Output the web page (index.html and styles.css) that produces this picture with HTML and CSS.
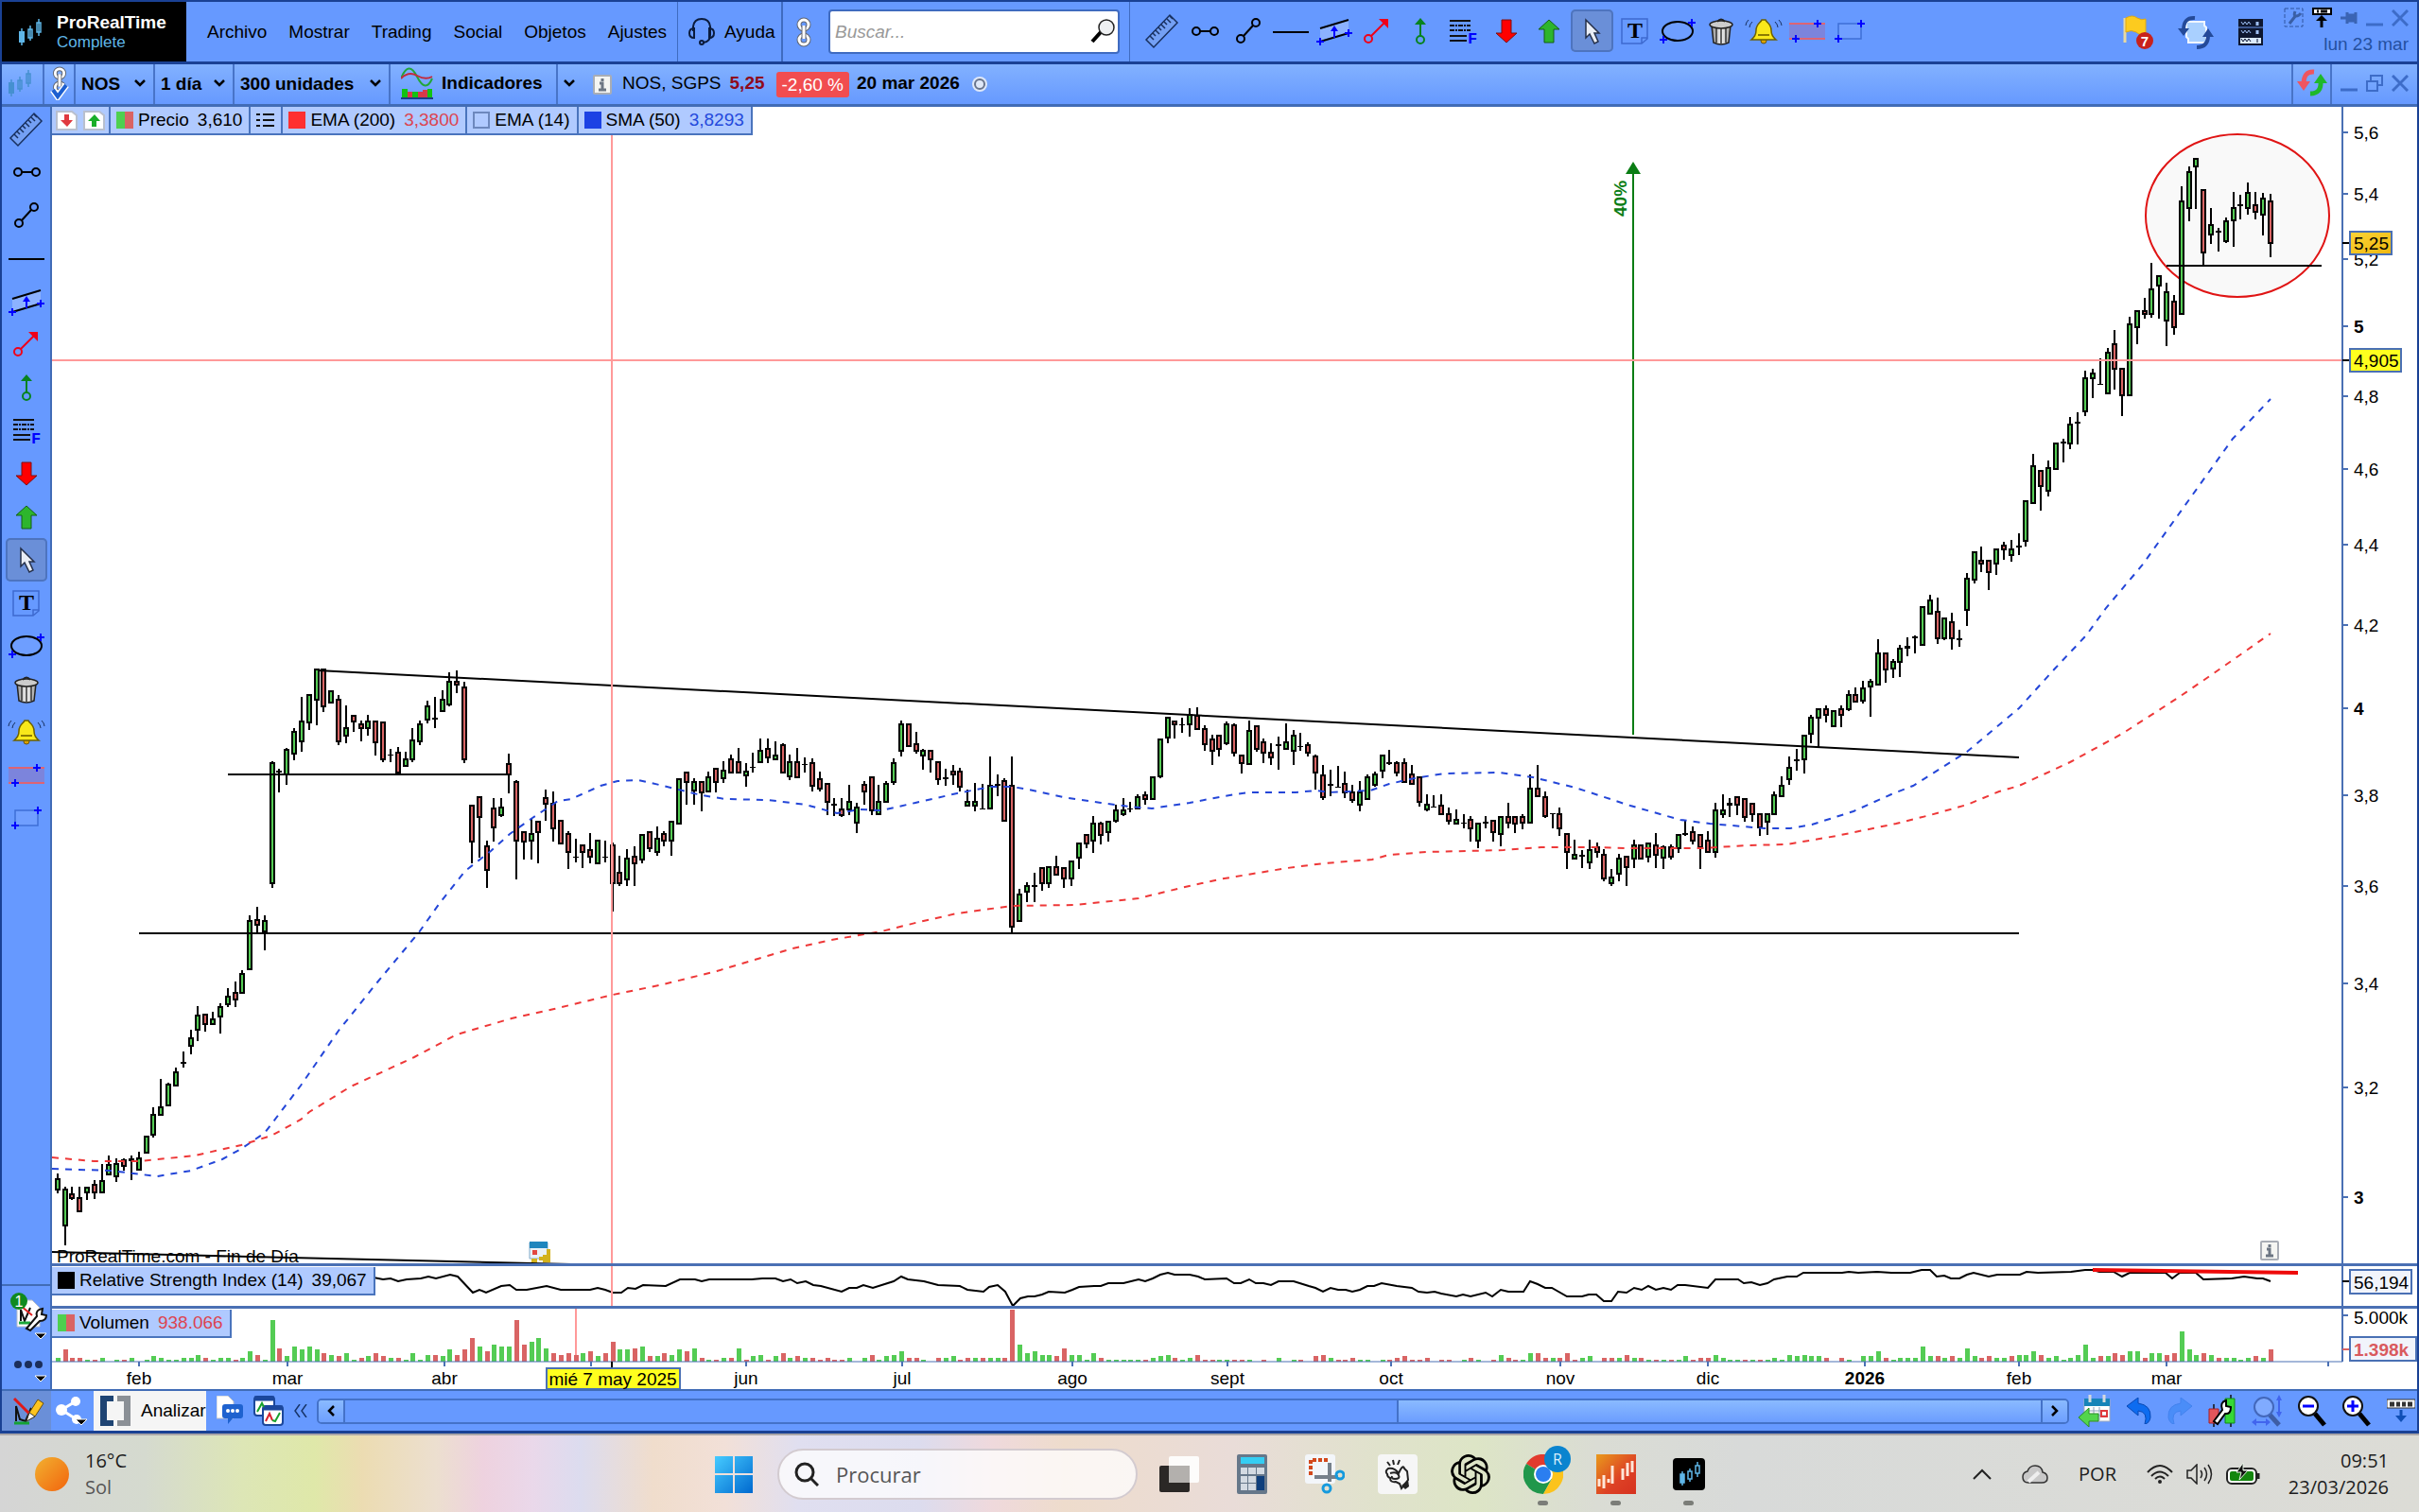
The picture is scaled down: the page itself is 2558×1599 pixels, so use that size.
FILE: index.html
```html
<!DOCTYPE html>
<html lang="es">
<head>
    <meta charset="UTF-8">
    <meta name="viewport" content="width=device-width, initial-scale=1.0">
    <title>ProRealTime Complete</title>
    <link rel="stylesheet" href="styles.css">
</head>
<body>
    <svg class="defs" aria-hidden="true">
        <defs>
            <linearGradient id="gold" x1="0" y1="0" x2="1" y2="1"><stop offset="0" stop-color="#fbd437"/><stop offset="1" stop-color="#efb70f"/></linearGradient>
            <linearGradient id="metal" x1="0" y1="0" x2="1" y2="0"><stop offset="0" stop-color="#8d8d8d"/><stop offset="0.5" stop-color="#f4f4f4"/><stop offset="1" stop-color="#9a9a9a"/></linearGradient>
            <linearGradient id="win" x1="0" y1="0" x2="1" y2="1"><stop offset="0" stop-color="#46cbff"/><stop offset="1" stop-color="#0069cf"/></linearGradient>
            <linearGradient id="sun" x1="0" y1="0" x2="1" y2="1"><stop offset="0" stop-color="#f2b130"/><stop offset="1" stop-color="#f2640d"/></linearGradient>
            <linearGradient id="fire" x1="0" y1="0" x2="1" y2="1"><stop offset="0" stop-color="#e99a1c"/><stop offset="0.6" stop-color="#dd4125"/><stop offset="1" stop-color="#d6321f"/></linearGradient>
        </defs>
        <symbol id="i-ruler" viewBox="-20 -20 40 40"><path d="M-17 9 8-17l8 8-25 26z" fill="#74a0f4" stroke="#18305f" stroke-width="1.5"/><path d="m-13 5 4 4m-1-7 3 3m0-6 4 4m-1-7 3 3m0-6 4 4m-1-7 3 3m0-6 4 4m-1-7 3 3" stroke="#18305f" stroke-width="1.5"/></symbol>
        <symbol id="i-segment" viewBox="-20 -20 40 40"><path d="M-5 0H6" stroke="#000" stroke-width="2"/><g fill="none" stroke="#000" stroke-width="2"><circle cx="-9" r="4"/><circle cx="10" r="4"/></g></symbol>
        <symbol id="i-line" viewBox="-20 -20 40 40"><path d="M-5 5 5-6" stroke="#000" stroke-width="2"/><g fill="none" stroke="#000" stroke-width="2"><circle cx="-8" cy="8" r="4"/><circle cx="8" cy="-9" r="4"/></g></symbol>
        <symbol id="i-hline" viewBox="-20 -20 40 40"><path d="M-19 1h38" stroke="#000" stroke-width="2"/></symbol>
        <symbol id="i-channel" viewBox="-20 -20 40 40"><path d="M-15-4 15-12V2l-30 9z" fill="#8cb2ff"/><path d="M-15-3 15-12M-15 11 15 2" stroke="#000" stroke-width="2"/><path d="M-19 11h8m-4-4v8M11 2h8m-4-4v8M0 7v-8" stroke="#00f" stroke-width="2"/><path d="m0-6 4 6h-8z" fill="#00f"/></symbol>
        <symbol id="i-arrow" viewBox="-20 -20 40 40"><path d="M-6 5 8-9" stroke="#f00018" stroke-width="2"/><circle cx="-9" cy="8" r="4" fill="none" stroke="#f00018" stroke-width="2"/><path d="M2-13h10v10z" fill="#f00018"/></symbol>
        <symbol id="i-measure" viewBox="-20 -20 40 40"><path d="M0 5v-14" stroke="#07831f" stroke-width="2"/><circle cy="9" r="4" fill="none" stroke="#07831f" stroke-width="2"/><path d="m0-14 6 7H-6z" fill="#07831f"/></symbol>
        <symbol id="i-fib" viewBox="-20 -20 40 40"><path d="M-14-11H8M-14 5H4M-14 10H4" stroke="#111" stroke-width="2"/><path d="M-14-6H8M-14-1H8" stroke="#111" stroke-width="2" stroke-dasharray="5 1 2 1"/></symbol>
        <symbol id="i-down" viewBox="-20 -20 40 40"><path d="M-5-12H5V2h6L0 12-11 2h6z" fill="#f00" stroke="#7c1010"/></symbol>
        <symbol id="i-up" viewBox="-20 -20 40 40"><path d="M-5 12H5V-2h6L0-12-11-2h6z" fill="#2db52d" stroke="#155e15"/></symbol>
        <symbol id="i-cursor" viewBox="-20 -20 40 40"><path d="M-6-12V7l4-4 5 10 4-2-4-9h5z" fill="#e9edf5" stroke="#25304a" stroke-width="1.5"/></symbol>
        <symbol id="i-text" viewBox="-20 -20 40 40"><path d="M-14-13h27V8l-6 5h-21zM13 7H7v6" fill="none" stroke="#3e6ad0" stroke-width="1.5"/></symbol>
        <symbol id="i-ellipse" viewBox="-20 -20 40 40"><ellipse rx="16" ry="10" fill="#6e9eff" stroke="#000" stroke-width="2"/><path d="M-19 9h8m-4-4v8M11-9h8m-4-4v8" stroke="#00f" stroke-width="2"/></symbol>
        <symbol id="i-bin" viewBox="-20 -20 40 40"><path d="m-10-6 2 18q8 4 16 0l2-18z" fill="url(#metal)" stroke="#222" stroke-width="1.5"/><path d="M-5-3v15M0-3v16M5-3v15" stroke="#333" stroke-width="1.5"/><ellipse cy="-7" rx="12" ry="4" fill="#ccc" stroke="#222" stroke-width="1.5"/><path d="M-4-10q4-5 8 0" fill="none" stroke="#222" stroke-width="2"/></symbol>
        <symbol id="i-bell" viewBox="-20 -20 40 40"><circle cy="10" r="3" fill="#dca200" stroke="#6b5400"/><path d="M-13 9q5-4 5-10c0-7 5-8 6-11h4c1 3 6 4 6 11q0 6 5 10z" fill="#f9e81a" stroke="#6b5f00" stroke-width="1.5"/><path d="M-6 4H6" stroke="#8d7c00" stroke-width="2"/><path d="M-12-10q-3 3-3 6M-16-12q-3 3-3 6M12-10q3 3 3 6M16-12q3 3 3 6" fill="none" stroke="#18305f"/></symbol>
        <symbol id="i-levels" viewBox="-20 -20 40 40"><path d="M-19-8h38V8h-38z" fill="#7c84dc"/><path d="M-19-8h38M-19 8h38" stroke="#dd6474" stroke-width="2"/><path d="M-16 8h8m-4-4v8M7-8h8m-4-4v8" stroke="#00f" stroke-width="2"/></symbol>
        <symbol id="i-rect" viewBox="-20 -20 40 40"><path d="M-12-8h24V8h-24z" fill="#709fff" stroke="#3e6fd6" stroke-width="1.5"/><path d="M-16 8h8m-4-4v8M8-8h8m-4-4v8" stroke="#00f" stroke-width="2"/></symbol>
        <symbol id="i-chain" viewBox="0 0 16 32"><g fill="none" stroke="#606672" stroke-width="5"><rect x="3" y="3" width="10" height="10" rx="5"/><rect x="3" y="19" width="10" height="10" rx="5"/></g><g fill="none" stroke="#fff" stroke-width="3"><rect x="3" y="3" width="10" height="10" rx="5"/><rect x="3" y="19" width="10" height="10" rx="5"/></g><path d="M8 9v14" stroke="#606672" stroke-width="5"/><path d="M8 9v14" stroke="#fff" stroke-width="3"/></symbol>
        <symbol id="i-candles" viewBox="0 0 26 28"><path d="M4 10v18M13 7v16M22 0v18" stroke="currentColor" stroke-width="1.5"/><path d="M1 13h6v12H1z" fill="currentColor"/><path d="M11 11h4v9h-4zM20 4h4v10h-4z" class="hollow" stroke="currentColor" stroke-width="1.5"/></symbol>
        <symbol id="i-chev" viewBox="0 0 12 8"><path d="m1 1 5 5 5-5" fill="none" stroke="#000" stroke-width="2.5"/></symbol>
        <symbol id="i-info" viewBox="0 0 20 21"><rect x="1" y="1" width="18" height="19" rx="1" fill="#f5f5f2" stroke="#a9adb5" stroke-width="2"/><path d="M10 4v3M7 9h3v7M6 16h8" fill="none" stroke="#6d7683" stroke-width="3"/></symbol>
        <symbol id="i-close" viewBox="0 0 18 18"><path d="m1 1 16 16M17 1 1 17" stroke="#3d6cc8" stroke-width="3"/></symbol>
        <symbol id="i-min" viewBox="0 0 18 18"><path d="M0 16h18" stroke="#3d6cc8" stroke-width="3"/></symbol>
        <symbol id="i-more" viewBox="0 0 14 8"><path d="M1 1h12L7 7z" fill="#000" stroke="#fff"/></symbol>
    </svg>

    <div class="app">
        <header class="top-bar">
            <div class="brand">
                <svg class="brand-icon" width="26" height="28"><use href="#i-candles"/></svg>
                <div>
                    <div class="brand-name">ProRealTime</div>
                    <div class="brand-edition">Complete</div>
                </div>
            </div>
            <nav class="menu">
                <button>Archivo</button>
                <button>Mostrar</button>
                <button>Trading</button>
                <button>Social</button>
                <button>Objetos</button>
                <button>Ajustes</button>
            </nav>
            <button class="help">
                <svg width="28" height="29" viewBox="0 0 28 29" fill="none" stroke="#0b1b3c" stroke-width="2"><path d="M5 14V9Q6 1 14 1t9 8v9q0 7-7 8"/><path d="M6 11q-5 0-5 5t5 5zM22 11q5 0 5 5t-5 5z"/><circle cx="14" cy="26" r="2"/></svg>
                Ayuda
            </button>
            <button class="link-btn" aria-label="Vincular"><svg width="16" height="32"><use href="#i-chain"/></svg></button>
            <label class="search">
                <input type="search" placeholder="Buscar..." aria-label="Buscar">
                <svg width="26" height="26" viewBox="0 0 26 26"><path d="m2 24 9-10" stroke="#000" stroke-width="4"/><circle cx="17" cy="9" r="8" fill="#eef0f2" stroke="#222" stroke-width="1.5"/></svg>
            </label>
            <div class="tools tools-top"></div>
            <div class="status">
                <svg width="32" height="36" viewBox="0 0 32 36"><path d="M2 3v26" stroke="#e9d9a0" stroke-width="3"/><path d="M3 3q7-4 12 0 5 3 9 1v15q-6 3-10-1-5-3-11 0z" fill="#fccb1f" stroke="#e0a910"/><circle cx="23" cy="27" r="9" fill="#c8211c"/><text x="23" y="33" text-anchor="middle" font-size="15" font-weight="700" fill="#fff">7</text></svg>
                <svg width="38" height="36" viewBox="0 0 38 36"><path d="M9 7h19v4l2 2v16H11v-4l-2-2z" fill="#a9d0ff" stroke="#f0f6ff" stroke-width="2"/><path d="M18 3Q6 2 6 16M20 34q12 0 12-13" fill="none" stroke="#244a99" stroke-width="4"/><path d="M0 14h12l-6 8zM26 23h12l-6-9z" fill="#244a99"/></svg>
                <svg width="26" height="28" viewBox="0 0 26 28"><path d="M0 0h26v18H0z" fill="#0e1730"/><path d="M1 19h24v8H1z" fill="#dcebff" stroke="#0e1730" stroke-width="2"/><path d="m3 3 2 3 2-3 2 3 2-3 2 3m-10 6 2 3 2-3 2 3 2-3 2 3" fill="none" stroke="#9fc0f5"/><path d="M0 9h26" stroke="#6a96ea"/><path d="M20 3v4m0 5v4" stroke="#9fc0f5" stroke-width="3"/><path d="m3 21 2 3 2-3 2 3 2-3 2 3m7-3v4" fill="none" stroke="#0e1730"/></svg>
            </div>
            <div class="window-info">
                <div class="window-controls">
                    <svg width="21" height="21" viewBox="0 0 21 21"><path d="M1 1h19v19H1z" fill="none" stroke="#2f559f" stroke-dasharray="4 2"/><path d="m6 17 7-9m-1-4q-2 5 1 5t5-3" stroke="#3a5fa5" stroke-width="3" fill="none"/></svg>
                    <svg width="21" height="21" viewBox="0 0 21 21"><path d="M1 1h19v6H1z" fill="#fff" stroke="#000" stroke-width="2"/><path d="M5 4h2m2 0h7M10 21v-8" stroke="#000" stroke-width="3"/><path d="m10 8 6 6H4z"/></svg>
                    <svg width="18" height="18" viewBox="0 0 18 18"><path d="M0 9h6M7 3v12M8 6h8v6H8zM16 3v12" stroke="#3a64b4" stroke-width="3" fill="#3a64b4"/></svg>
                    <svg width="18" height="18"><use href="#i-min"/></svg>
                    <svg width="18" height="18"><use href="#i-close"/></svg>
                </div>
                <div class="today">lun 23 mar</div>
            </div>
        </header>

        <div class="chart-bar">
            <button class="cell cell-icon" aria-label="Gráfico"><svg class="faded" width="26" height="28"><use href="#i-candles"/></svg></button>
            <button class="cell cell-chain" aria-label="Vincular gráfico">
                <svg width="20" height="36" viewBox="0 0 20 36"><use href="#i-chain" x="2" y="0" width="16" height="30"/><path d="m3 25 5 7 9-12" fill="none" stroke="#fff" stroke-width="7"/><path d="m3 25 5 7 9-12" fill="none" stroke="#1d5fd0" stroke-width="4"/></svg>
            </button>
            <div class="cell drop"><select class="w-symbol" aria-label="Valor"><option>NOS</option></select><svg width="12" height="8"><use href="#i-chev"/></svg></div>
            <div class="cell drop"><select class="w-frame" aria-label="Periodo"><option>1 día</option></select><svg width="12" height="8"><use href="#i-chev"/></svg></div>
            <div class="cell drop"><select class="w-units" aria-label="Unidades"><option>300 unidades</option></select><svg width="12" height="8"><use href="#i-chev"/></svg></div>
            <button class="cell indicators">
                <svg width="34" height="34" viewBox="0 0 34 34"><path d="M0 12Q8-8 17 10t16 2" fill="none" stroke="#22a63a" stroke-width="2"/><path d="M0 12q8-8 17-3t16 1" fill="none" stroke="#c22b3c" stroke-width="2"/><path d="M1 23h6v9H1zM12 26h6v6h-6zM28 23h5v9h-5z" fill="#12c312"/><path d="M7 26h5v6H7zM18 26h5v6h-5zM23 24h5v8h-5z" fill="#d8384b"/><path d="M0 33h34" stroke="#1c3d86" stroke-width="2"/></svg>
                Indicadores
            </button>
            <button class="chev-btn" aria-label="Más indicadores"><svg width="12" height="8"><use href="#i-chev"/></svg></button>
            <svg class="info" width="20" height="21"><use href="#i-info"/></svg>
            <span class="stock">NOS, SGPS</span>
            <span class="last">5,25</span>
            <span class="change">-2,60 %</span>
            <span class="date">20 mar 2026</span>
            <svg class="dot" width="18" height="18" viewBox="0 0 18 18"><circle cx="9" cy="9" r="8" fill="#dfe8f8"/><circle cx="9" cy="9" r="5" fill="#dfe8f8" stroke="#68748c" stroke-width="2"/></svg>
            <button class="sync" aria-label="Sincronizar"><svg width="34" height="30" viewBox="0 0 34 30"><path d="M19 3Q8 2 8 16" fill="none" stroke="#ee5560" stroke-width="5"/><path d="M1 13h14l-7 10z" fill="#ee5560"/><path d="M15 26q12 0 11-13" fill="none" stroke="#1eb82a" stroke-width="5"/><path d="M19 15h14l-7-10z" fill="#1eb82a"/></svg></button>
            <div class="window-controls chart-controls">
                <svg width="18" height="18"><use href="#i-min"/></svg>
                <svg width="18" height="18" viewBox="0 0 18 18" fill="none" stroke="#3d6cc8" stroke-width="2"><path d="M1 7h11v10H1zM5 7V1h12v10h-5"/></svg>
                <svg width="18" height="18"><use href="#i-close"/></svg>
            </div>
        </div>

        <main class="workspace">
            <aside class="side-bar">
                <div class="tools tools-side"></div>
                <div class="side-foot">
                    <svg width="42" height="42" viewBox="0 0 42 42"><path d="M8 8h16l8 8v20H8z" fill="#fff" stroke="#b8bec8"/><path d="M12 30V18l4 12 6-14" fill="none" stroke="#111" stroke-width="2"/><path d="m12 14 12 10" stroke="#e02020" stroke-width="2"/><path d="M10 32h12" stroke="#1aa73b" stroke-width="3"/><path d="m18 38 11-13q-2-7 6-8l-1 6 5 1q0 6-7 6L22 40z" fill="#fff" stroke="#111" stroke-width="2"/><circle cx="10" cy="9" r="9" fill="#0f8a1f"/><text x="10" y="15" text-anchor="middle" font-size="16" fill="#fff">1</text></svg>
                    <svg class="more" width="14" height="8"><use href="#i-more"/></svg>
                    <svg class="dots" width="30" height="8" viewBox="0 0 30 8" fill="#1b2e5a"><circle cx="4" cy="4" r="4"/><circle cx="15" cy="4" r="4"/><circle cx="26" cy="4" r="4"/></svg>
                    <svg class="more" width="14" height="8"><use href="#i-more"/></svg>
                </div>
            </aside>

            <div class="panels">
                <section class="panel">
                    <div class="legend">
                        <span class="legend-item legend-arrows">
                            <svg width="23" height="21" viewBox="0 0 23 21"><path d="M1 1h16l5 4v15H1z" fill="#fff" stroke="#b8bfce" stroke-width="2"/><path d="M9 4h5v6h4l-6 7-7-7h4z" fill="#e0393f"/></svg>
                            <svg width="23" height="21" viewBox="0 0 23 21"><path d="M1 1h16l5 4v15H1z" fill="#fff" stroke="#b8bfce" stroke-width="2"/><path d="M9 17h5v-6h4l-6-7-7 7h4z" fill="#1aae28"/></svg>
                        </span>
                        <span class="legend-item"><i class="swatch sw-price"></i>Precio <b>3,610</b></span>
                        <span class="legend-item"><svg width="19" height="16" viewBox="0 0 19 16" stroke="#111" stroke-width="2"><path d="M0 2h4M0 8h4M0 14h4M7 2h12M7 8h12M7 14h12"/></svg></span>
                        <span class="legend-item"><i class="swatch sw-red"></i>EMA (200) <b class="red">3,3800</b></span>
                        <span class="legend-item"><i class="swatch sw-empty"></i>EMA (14)</span>
                        <span class="legend-item"><i class="swatch sw-blue"></i>SMA (50) <b class="blue">3,8293</b></span>
                    </div>
                    <svg id="price" class="plot" viewBox="55 113 2501 1225"></svg>
                </section>
                <section class="panel">
                    <div class="legend">
                        <span class="legend-item"><i class="swatch sw-black"></i>Relative Strength Index (14) <b>39,067</b></span>
                    </div>
                    <svg id="rsi" class="plot" viewBox="55 1338 2501 45"></svg>
                </section>
                <section class="panel">
                    <div class="legend">
                        <span class="legend-item"><i class="swatch sw-price"></i>Volumen <b class="red">938.066</b></span>
                    </div>
                    <svg id="volume" class="plot" viewBox="55 1383 2501 86"></svg>
                </section>
            </div>
        </main>

        <footer class="bottom-bar">
            <button class="draw" aria-label="Dibujar"><svg width="34" height="30" viewBox="0 0 34 30"><path d="M4 26V10l4 14 6 2 6-14" fill="none" stroke="#111" stroke-width="2"/><path d="m2 2 18 18" stroke="#e01818" stroke-width="3"/><path d="M2 28h16" stroke="#15a235" stroke-width="3"/><path d="m15 26 3-9L27 3l6 4-9 14z" fill="#fcc41f" stroke="#6b5010"/><path d="m15 26 3-9 6 4z" fill="#fff" stroke="#333"/></svg></button>
            <button class="share" aria-label="Compartir"><svg width="34" height="32" viewBox="0 0 34 32"><path d="M21 6 6 15l16 10" fill="none" stroke="#fff" stroke-width="3"/><g fill="#fff"><circle cx="21" cy="6" r="5"/><circle cx="6" cy="15" r="6"/><circle cx="22" cy="25" r="5"/></g><use href="#i-more" x="20" y="24" width="14" height="8"/></svg></button>
            <button class="analyze"><svg width="32" height="32" viewBox="0 0 32 32"><path d="M0 0h14v6H7v20h7v6H0z" fill="#1f4473"/><path d="M32 0H18v6h7v20h-7v6h14z" fill="#8b9096"/></svg>Analizar</button>
            <button class="plain" aria-label="Comentarios"><svg width="28" height="32" viewBox="0 0 28 32"><path d="M0 0h12l6 6v18H0z" fill="#fff" stroke="#b9bfc9"/><path d="M9 9h16q3 0 3 3v9q0 3-3 3h-8l-5 6v-6H9q-3 0-3-3v-9q0-3 3-3z" fill="#1e62cf"/><g fill="#fff"><circle cx="12" cy="16" r="2"/><circle cx="17" cy="16" r="2"/><circle cx="22" cy="16" r="2"/></g></svg></button>
            <button class="plain" aria-label="Gráficos"><svg width="32" height="32" viewBox="0 0 32 32"><g fill="#fff" stroke="#1b479c" stroke-width="2"><rect x="1" y="1" width="21" height="20" rx="3"/><rect x="10" y="11" width="21" height="20" rx="3"/></g><path d="M1 3h21M10 13h21" stroke="#1b479c" stroke-width="5"/><path d="m4 17 5-9 2 4" fill="none" stroke="#18a12c" stroke-width="2"/><path d="m13 27 4-8 3 7" fill="none" stroke="#d8232e" stroke-width="2"/><path d="m20 26 3 1 5-9" fill="none" stroke="#18a12c" stroke-width="2"/></svg></button>
            <button class="plain" aria-label="Plegar"><svg width="14" height="14" viewBox="0 0 14 14" fill="none" stroke="#173469" stroke-width="1.5"><path d="M6 0 1 7l5 7M13 0 8 7l5 7"/></svg></button>
            <div class="scroll">
                <button aria-label="Atrás"><svg width="8" height="12" viewBox="0 0 8 12"><path d="M7 1 2 6l5 5" fill="none" stroke="#000" stroke-width="2.5"/></svg></button>
                <div class="track"><div class="thumb"></div></div>
                <button aria-label="Adelante"><svg width="8" height="12" viewBox="0 0 8 12"><path d="m1 1 5 5-5 5" fill="none" stroke="#000" stroke-width="2.5"/></svg></button>
            </div>
            <div class="zooms">
                <svg width="34" height="34" viewBox="0 0 34 34"><path d="M6 5h27v23H6z" fill="#fff" stroke="#a6adba"/><path d="M6 4h27v8H6z" fill="#1784b8"/><path d="M12 0v8M27 0v8" stroke="#d6d9dd" stroke-width="3"/><path d="M10 17h20M10 22h20M16 13v14M22 13v14" stroke="#8fa0b8"/><path d="M24 17h6v6h-6z" fill="none" stroke="#e0383c" stroke-width="2"/><path d="M0 24 11 14v6h10v8H11v6z" fill="#53d54c" stroke="#2b8d27"/></svg>
                <svg width="28" height="28" viewBox="0 0 28 28"><path d="M1 9 13 0v6q14 2 13 15-1 6-6 7 4-13-7-14v5z" fill="#0d6cf0" stroke="#0849b5"/></svg>
                <svg width="28" height="28" viewBox="0 0 28 28"><path d="M27 9 15 0v6Q1 8 2 21q1 6 6 7-4-13 7-14v5z" fill="#4a8df8" stroke="#4382ee"/></svg>
                <svg width="30" height="34" viewBox="0 0 30 34"><path d="M6 10v24M24 0v34" stroke="#111" stroke-width="1.5"/><path d="M1 15h10v15H1z" fill="#e4565c" stroke="#a51e26"/><path d="M18 4h10v26H18z" fill="#36d836" stroke="#118a16"/><path d="m6 28 9-12q-3-8 4-10v6l5 1q0 8-6 7L10 31z" fill="#fff" stroke="#000" stroke-width="2"/></svg>
                <svg width="32" height="34" viewBox="0 0 32 34"><path d="m19 21 10 11" stroke="#3e5ea6" stroke-width="5"/><circle cx="13" cy="13" r="10" fill="#80abff" stroke="#4368bb" stroke-width="2"/><path d="M29 3v18M3 29h14" stroke="#4165ee" stroke-width="2"/><path d="m29 0 3 6h-6zM29 24l3-6h-6zM0 29l5-4v8zM20 29l-5-4v8z" fill="#4165ee"/></svg>
                <svg width="32" height="34" viewBox="0 0 32 34"><path d="m19 20 10 12" stroke="#000" stroke-width="5"/><circle cx="12" cy="12" r="10" fill="#fff" stroke="#111" stroke-width="2"/><path d="M6 12h12" stroke="#00f" stroke-width="3"/></svg>
                <svg width="32" height="34" viewBox="0 0 32 34"><path d="m19 20 10 12" stroke="#000" stroke-width="5"/><circle cx="12" cy="12" r="10" fill="#fff" stroke="#111" stroke-width="2"/><path d="M6 12h12M12 6v12" stroke="#00f" stroke-width="3"/></svg>
                <svg width="30" height="26" viewBox="0 0 30 26"><path d="M0 1h30v9H0z" fill="#fff" stroke="#333"/><path d="M3 6h5m2 0h4m2 0h4m2 0h5" stroke="#333" stroke-width="5"/><path d="M15 12v9" stroke="#104fb5" stroke-width="3"/><path d="M9 18h12l-6 7z" fill="#104fb5"/></svg>
            </div>
        </footer>
    </div>

    <div class="taskbar">
        <div class="weather">
            <svg width="36" height="36" viewBox="0 0 36 36"><circle cx="18" cy="18" r="18" fill="url(#sun)"/></svg>
            <div>16°C<br><span>Sol</span></div>
        </div>
        <div class="apps">
            <svg class="start" width="40" height="40" viewBox="0 0 40 40" fill="url(#win)"><path d="M0 1h19v18H0zM21 1h19v18H21zM0 21h19v19H0zM21 21h19v19H21z"/></svg>
            <label class="task-search">
                <svg width="26" height="26" viewBox="0 0 26 26" fill="none" stroke="#222" stroke-width="3"><circle cx="11" cy="11" r="9"/><path d="m17 17 8 8"/></svg>
                <input type="text" placeholder="Procurar" aria-label="Procurar">
            </label>
            <svg width="42" height="42" viewBox="0 0 42 42"><rect y="12" width="32" height="28" rx="2" fill="#2b2826"/><rect x="10" y="2" width="32" height="28" rx="2" fill="#fdfcfb"/><path d="M10 12h22v18H10z" fill="#b3b0ad"/></svg>
            <svg width="42" height="42" viewBox="0 0 42 42"><rect x="5" width="32" height="42" rx="2" fill="#66778a"/><rect x="9" y="3" width="25" height="7" fill="#35cdf3"/><g fill="#d3dae2"><path d="M9 14h7v7H9zM17 14h8v7h-8zM26 14h8v7h-8zM9 23h7v7H9zM17 23h8v7h-8zM9 31h7v7H9zM17 31h8v7h-8z"/></g><path d="M26 23h8v15h-8z" fill="#0f3f7c"/></svg>
            <svg width="42" height="42" viewBox="0 0 42 42"><rect width="32" height="31" rx="3" fill="#f3f6fa"/><path d="M6 22V6h16v4" fill="none" stroke="#d3481b" stroke-width="4" stroke-dasharray="4 2"/><path d="M26 9v20M10 24h25" stroke="#76808b" stroke-width="4"/><g fill="none" stroke="#159ade" stroke-width="3"><circle cx="37" cy="22" r="4"/><circle cx="23" cy="36" r="4"/></g></svg>
            <svg width="42" height="42" viewBox="0 0 42 42"><rect width="42" height="42" rx="4" fill="#f6f6f6"/><path d="m10 8 3 4m3-6 1 5m6-5-2 5" stroke="#222" stroke-width="2"/><path d="M11 15q-4 3-1 6 0 3 3 4 0 5 6 4l4 2 2 5 7-9-1-9-3-3q-1-4-4 1l-2 4q-4-6-11-5zm2 5q7-2 9 2t-4 4q-4 0-3-3" fill="none" stroke="#222" stroke-width="2"/><path d="m25 33 7-6 1 7-4 3z" fill="#222"/></svg>
            <svg width="42" height="42" viewBox="0 0 24 24"><path d="M22.28 9.82a5.98 5.98 0 0 0-.52-4.91 6.05 6.05 0 0 0-6.5-2.9A6.07 6.07 0 0 0 4.98 4.18a5.98 5.98 0 0 0-4 2.9 6.05 6.05 0 0 0 .74 7.1 5.98 5.98 0 0 0 .52 4.91 6.05 6.05 0 0 0 6.5 2.9A5.98 5.98 0 0 0 13.26 24a6.06 6.06 0 0 0 5.77-4.21 5.99 5.99 0 0 0 4-2.9 6.06 6.06 0 0 0-.75-7.07zm-9.02 12.61a4.48 4.48 0 0 1-2.88-1.04l.14-.08 4.78-2.76a.79.79 0 0 0 .4-.68v-6.74l2.01 1.17a.07.07 0 0 1 .04.05v5.58a4.5 4.5 0 0 1-4.49 4.5zM3.6 18.3a4.47 4.47 0 0 1-.54-3.01l.14.08 4.79 2.76a.77.77 0 0 0 .78 0l5.84-3.37v2.33a.08.08 0 0 1-.03.06L9.74 19.95A4.5 4.5 0 0 1 3.6 18.3zM2.34 7.9a4.49 4.49 0 0 1 2.37-1.98V11.6a.77.77 0 0 0 .38.68l5.82 3.35-2.02 1.17a.08.08 0 0 1-.07 0l-4.83-2.79A4.5 4.5 0 0 1 2.34 7.87zm16.6 3.85L13.1 8.36 15.12 7.2a.08.08 0 0 1 .07 0l4.83 2.79a4.49 4.49 0 0 1-.68 8.1v-5.67a.79.79 0 0 0-.4-.67zm2-3.02-.14-.09-4.77-2.78a.78.78 0 0 0-.79 0L9.41 9.23V6.9a.07.07 0 0 1 .03-.06l4.83-2.79a4.5 4.5 0 0 1 6.68 4.66zM8.3 12.86 6.29 11.7a.08.08 0 0 1-.04-.06V6.07a4.5 4.5 0 0 1 7.38-3.45l-.15.08L8.7 5.46a.79.79 0 0 0-.39.68zm1.1-2.36L12 9l2.61 1.5v3L12.01 15 9.4 13.5z"/></svg>
            <span class="running">
                <svg width="42" height="42" viewBox="-21 -21 42 42"><path d="M0 0-18-11A21 21 0 0 1 18-11z" fill="#e23b2e"/><path d="M0 0-18-11A21 21 0 0 0 0 21l9-16z" fill="#20974b"/><path d="M0 0 18-11A21 21 0 0 1 0 21L9 5z" fill="#fbc31c"/><circle r="10" fill="#fff"/><circle r="8" fill="#2b7ef0"/></svg>
                <em class="badge">R</em>
            </span>
            <span class="running">
                <svg width="42" height="42" viewBox="0 0 42 42"><path d="M0 0h42v42H0z" fill="url(#fire)"/><path d="M3 26v8m5-12v14m5-10v4m4-18v19m11-16v12m5-18v14m5-16v12" stroke="#ffe6d8" stroke-width="3"/></svg>
            </span>
            <span class="running">
                <svg width="42" height="42" viewBox="0 0 42 42"><rect x="4" y="4" width="34" height="34" rx="4"/><g stroke="#5fb6e8" stroke-width="1.5"><path d="M14 18v15M22 15v14M30 8v16"/><path d="M12 21h4v9h-4z" fill="#5fb6e8"/><path d="M20 18h4v8h-4zM28 12h4v8h-4z" fill="#000"/></g></svg>
            </span>
        </div>
        <div class="tray">
            <svg width="20" height="12" viewBox="0 0 20 12"><path d="m1 11 9-9 9 9" fill="none" stroke="#222" stroke-width="2"/></svg>
            <svg width="28" height="20" viewBox="0 0 28 20"><path d="M7 19q-6 0-6-6 0-5 5-6Q8 1 14 1q7 0 8 7 5 1 5 6 0 5-6 5z" fill="#c8c8c8" stroke="#333" stroke-width="1.5"/><path d="m7 18 11-10" stroke="#eee" stroke-width="4"/></svg>
            <span>POR</span>
            <svg width="28" height="20" viewBox="0 0 28 20" fill="none" stroke="#222" stroke-width="2"><path d="M1 8q13-14 26 0M5 12q9-9 18 0M9 15q5-5 10 0"/><circle cx="14" cy="18" r="1"/></svg>
            <svg width="28" height="22" viewBox="0 0 28 22" fill="none" stroke="#222" stroke-width="1.5"><path d="M1 7v8h4l6 6V1L5 7zM15 7q3 4 0 8M19 4q5 7 0 14M23 1q7 10 0 20"/></svg>
            <svg width="36" height="24" viewBox="0 0 36 24"><rect x="1" y="6" width="31" height="16" rx="5" fill="#fff" stroke="#222" stroke-width="2"/><rect x="4" y="9" width="25" height="10" rx="2" fill="#14860f"/><path d="M34 11v6" stroke="#222" stroke-width="3"/><path d="m18 0-7 10h5l-2 8 9-10h-5z" fill="#111" stroke="#e8f4e6"/></svg>
            <div class="clock">09:51<br>23/03/2026</div>
        </div>
    </div>

    <script src="chart.js"></script>
</body>
</html>
```
FILE: styles.css
```css
* {
    box-sizing: border-box;
}
body {
    margin: 0;
    min-height: 100vh;
    display: flex;
    flex-direction: column;
    font-family: 'Liberation Sans', Arial, sans-serif;
    font-size: 19px;
    color: #000;
    background: #d9dad6;
}
svg {
    display: block;
    flex: none;
}
button, select, input {
    font: inherit;
    color: inherit;
    background: none;
    border: 0;
    padding: 0;
    margin: 0;
    white-space: nowrap;
}
.defs {
    position: absolute;
    width: 0;
    height: 0;
}
.hollow {
    fill: transparent;
}
.app {
    border: 2px solid #1a4194;
    border-width: 2px 2px 3px;
    background: #6699ff;
}

/* top bar */
.top-bar {
    display: flex;
    align-items: center;
    height: 66px;
    border-bottom: 3px solid #1a4194;
}
.brand {
    display: flex;
    align-items: center;
    gap: 15px;
    align-self: stretch;
    width: 195px;
    padding-left: 17px;
    background: #000;
}
.brand-icon {
    color: #5fb6e8;
}
.brand-name {
    font-weight: 700;
    color: #fff;
    line-height: 22px;
}
.brand-edition {
    font-size: 17px;
    line-height: 20px;
    color: #5fb6e8;
}
.menu {
    display: flex;
    gap: 23px;
    padding: 0 11px 0 22px;
}
.help {
    display: flex;
    align-items: center;
    gap: 10px;
    align-self: stretch;
    width: 112px;
    padding-left: 11px;
    border: 1px solid #3f6bc0;
    border-width: 0 2px 0 1px;
}
.link-btn {
    display: flex;
    justify-content: center;
    width: 48px;
}
.link-btn svg {
    margin-right: 4px;
}
.search {
    position: relative;
    width: 308px;
    margin-right: 10px;
}
.search input {
    display: block;
    width: 100%;
    height: 47px;
    padding: 0 40px 0 5px;
    background: #fff;
    border: 2px solid #3f6bc0;
    border-radius: 4px;
}
.search input::placeholder {
    color: #999;
    font-style: italic;
    opacity: 1;
}
.search svg {
    position: absolute;
    right: 5px;
    top: 10px;
}
.tools {
    display: flex;
}
.tools button {
    position: relative;
    flex: 1;
    display: flex;
    align-items: center;
    justify-content: center;
}
.tools svg {
    overflow: visible;
}
.tools .active {
    background: #6a8fd8;
    box-shadow: inset 0 0 0 2px #4d74bf;
    border-radius: 5px;
}
.glyph {
    position: absolute;
    inset: 0;
    display: flex;
    align-items: center;
    justify-content: center;
    font: 700 24px 'Liberation Serif', serif;
}
.glyph-fib {
    padding: 18px 0 0 20px;
    font: 700 17px 'Liberation Mono', monospace;
    color: #00f;
}
.tools-top {
    align-self: stretch;
    width: 785px;
    padding: 8px 0 10px 11px;
    border-left: 1px solid #3f6bc0;
}
.status {
    display: flex;
    align-items: center;
    gap: 26px;
    margin-left: auto;
    margin-right: 22px;
}
.window-info {
    width: 132px;
    margin-right: 9px;
}
.window-controls {
    display: flex;
    align-items: center;
    gap: 9px;
}
.today {
    color: #24509f;
    text-align: right;
    line-height: 24px;
    margin-top: 6px;
}

/* chart bar */
.chart-bar {
    display: flex;
    align-items: center;
    height: 45px;
    background: linear-gradient(#82b1ff, #6699ff);
    border-bottom: 3px solid #416cb6;
    white-space: nowrap;
}
.chart-bar > * {
    padding-bottom: 2px;
}
.cell {
    display: flex;
    align-items: center;
    align-self: stretch;
    padding: 0 6px 2px;
    border-right: 2px solid #4874c8;
    font-weight: 700;
}
.cell-icon {
    width: 45px;
}
.faded {
    color: #4590d0;
}
.cell-chain {
    width: 33px;
}
.drop {
    position: relative;
}
.drop select {
    appearance: none;
    padding-right: 20px;
}
.drop svg {
    position: absolute;
    right: 8px;
    top: 16px;
    pointer-events: none;
}
.w-symbol {
    width: 70px;
}
.w-frame {
    width: 70px;
}
.w-units {
    width: 151px;
}
.indicators {
    width: 177px;
    padding: 0 0 2px 11px;
    gap: 9px;
}
.chev-btn {
    width: 24px;
    padding-left: 6px;
}
.info {
    margin-left: 13px;
    padding: 0;
}
.stock {
    margin-left: 11px;
}
.last {
    margin-left: 9px;
    font-weight: 700;
    color: #8f0a1c;
}
.change {
    margin: 0 8px 0 12px;
    padding: 0 6px;
    line-height: 27px;
    color: #fff;
    background: #f14d4f;
    border-radius: 3px;
}
.date {
    font-weight: 700;
}
.dot {
    margin-left: 12px;
    padding: 0;
}
.sync {
    display: flex;
    align-items: center;
    justify-content: center;
    align-self: stretch;
    width: 43px;
    margin-left: auto;
    border: 1px solid #4874c8;
    border-width: 0 2px;
}
.chart-controls {
    margin: 0 9px;
}

/* workspace */
.workspace {
    display: flex;
}
.side-bar {
    display: flex;
    flex-direction: column;
    width: 53px;
    flex: none;
    border-right: 2px solid #416cb6;
}
.tools-side {
    flex-direction: column;
    height: 775px;
    padding: 1px 3px 0 4px;
}
.side-foot {
    margin-top: auto;
    height: 111px;
    padding: 7px 0 0 8px;
    border-top: 2px solid #416cb6;
}
.side-foot .more {
    margin-left: 26px;
}
.side-foot .dots {
    margin: 22px 0 7px 5px;
}
.panels {
    flex: 1;
    min-width: 0;
    background: #fff;
}
.panel {
    position: relative;
}
.plot {
    width: 100%;
    height: auto;
    font-size: 19px;
}
.legend {
    position: absolute;
    left: 0;
    top: 0;
    display: flex;
    height: 30px;
    background: #b0caff;
    border-bottom: 2px solid #4a74bd;
}
.panel + .panel .legend {
    top: 2px;
}
.legend-item {
    display: flex;
    align-items: center;
    padding: 0 7px 0 6px;
    border-right: 2px solid #4a74bd;
    white-space: nowrap;
}
.legend-arrows {
    gap: 6px;
    padding: 0 4px;
}
.legend b {
    font-weight: 400;
    margin-left: 9px;
}
.legend .red {
    color: #dc4450;
}
.legend .blue {
    color: #2449dc;
}
.swatch {
    width: 18px;
    height: 18px;
    margin-right: 5px;
}
.sw-price {
    background: linear-gradient(90deg, #4fd04f 50%, #d96464 50%);
}
.sw-red {
    background: #ff3030;
}
.sw-blue {
    background: #1c42e4;
}
.sw-black {
    background: #000;
}
.sw-empty {
    border: 2px solid #6d88bd;
}

/* bottom bar */
.bottom-bar {
    display: flex;
    align-items: center;
    height: 44px;
    border-top: 2px solid #416cb6;
}
.bottom-bar button {
    display: flex;
    align-items: center;
    align-self: stretch;
}
.bottom-bar .draw {
    width: 52px;
    padding-left: 11px;
    background: #6a8fd8;
}
.bottom-bar .share {
    width: 45px;
    padding-left: 5px;
}
.bottom-bar .analyze {
    width: 119px;
    padding-left: 7px;
    gap: 11px;
    background: #f5f5f5;
}
.bottom-bar .plain {
    padding-left: 11px;
}
.scroll {
    display: flex;
    flex: 1;
    height: 27px;
    margin: 0 10px;
    border: 2px solid #4472c8;
    border-radius: 5px;
    overflow: hidden;
}
.scroll button {
    width: 26px;
    justify-content: center;
    background: linear-gradient(#8abaff, #6d9fff);
}
.track {
    flex: 1;
    border: 2px solid #4472c8;
    border-width: 0 2px;
}
.thumb {
    width: 38%;
    height: 100%;
    margin-left: auto;
    border-left: 2px solid #4472c8;
    background: linear-gradient(#8abaff, #6b9dff);
}
.zooms {
    display: flex;
    align-items: center;
    justify-content: space-between;
    width: 358px;
    padding-right: 2px;
}

/* windows taskbar */
.taskbar {
    flex: 1;
    display: grid;
    grid-template-columns: 1fr auto 1fr;
    align-items: center;
    min-height: 81px;
    border-top: 2px solid #aaa6a8;
    font-family: 'Open Sans', 'Segoe UI', sans-serif;
    font-size: 20px;
    line-height: 28px;
    color: #1d1d1d;
    background: linear-gradient(90deg, #d5d5d5 0%, #d5dacf 6%, #dde6b6 10%, #dfe8a9 13%, #ecdcb2 15%, #ecdfcf 18%, #eed2df 20%, #ead8ea 22%, #dcdcef 24%, #f0ddcc 27%, #f2e0d8 30%, #e0dff0 33%, #dcdcee 38%, #efd9dc 41%, #eedccc 44%, #e9dcd8 51%, #e0e2cc 57%, #dde5c6 61%, #dadcd4 66%, #d8dad9 72%, #dcdcd6 100%);
}
.weather {
    display: flex;
    align-items: center;
    gap: 17px;
    padding-left: 37px;
}
.weather span {
    color: #555;
}
.apps {
    display: flex;
    align-items: center;
    gap: 35px;
    padding-left: 5px;
}
.start {
    margin-right: -9px;
}
.task-search {
    display: flex;
    align-items: center;
    gap: 18px;
    width: 381px;
    height: 54px;
    margin-right: -12px;
    padding-left: 16px;
    background: rgba(255, 255, 255, 0.75);
    border: 2px solid #d3cbd0;
    border-radius: 27px;
}
.task-search input {
    width: 280px;
    font-size: 22px;
}
.task-search input::placeholder {
    color: #555;
    opacity: 1;
}
.running {
    position: relative;
}
.running::after {
    content: '';
    position: absolute;
    left: 15px;
    bottom: -12px;
    width: 11px;
    height: 5px;
    border-radius: 3px;
    background: #7b7d78;
}
.badge {
    position: absolute;
    left: 22px;
    top: -9px;
    width: 28px;
    height: 28px;
    border-radius: 50%;
    background: #0a84cf;
    color: #d9eefb;
    font-size: 16px;
    font-style: normal;
    text-align: center;
}
.tray {
    display: flex;
    align-items: center;
    justify-content: flex-end;
    gap: 14px;
    padding-right: 32px;
}
.tray > :first-child {
    margin-right: 18px;
}
.tray > span {
    margin: 0 18px;
}
.clock {
    width: 122px;
    text-align: right;
}
```
FILE: chart.js
```js
const NS = 'http://www.w3.org/2000/svg';
const GREEN = '#54cc54';
const RED = '#d96464';
const AXIS = '#4a70b4';
const barX = i => Math.round(60.7 + 7.826 * i);

function el(parent, name, attrs, text) {
    const node = document.createElementNS(NS, name);
    for (const key in attrs) node.setAttribute(key, attrs[key]);
    if (text !== undefined) node.textContent = text;
    parent.appendChild(node);
    return node;
}
function line(parent, x1, y1, x2, y2, stroke, width = 2) {
    return el(parent, 'line', { x1, y1, x2, y2, stroke, 'stroke-width': width });
}
function label(parent, x, y, text, extra = {}) {
    return el(parent, 'text', { x, y, ...extra }, text);
}

// drawing tools, shown both on top and at the side
const tools = ['ruler', 'segment', 'line', 'hline', 'channel', 'arrow', 'measure', 'fib', 'down', 'up',
    'cursor', 'text', 'ellipse', 'bin', 'bell', 'levels', 'rect'];
const glyphs = {
    text: '<span class="glyph">T</span>',
    fib: '<span class="glyph glyph-fib">F</span>',
};
document.querySelectorAll('.tools').forEach(box => {
    box.innerHTML = tools.map(t => `
        <button aria-label="${t}" class="${t === 'cursor' ? 'active' : ''}">
            <svg width="40" height="40"><use href="#i-${t}"/></svg>${glyphs[t] || ''}
        </button>`).join('');
});

// bars: high, body top, body bottom, low, colour (g up, r down, k doji)
// each block has its own origin and step on the y axis
const blocks = [
    { y: 680, k: 0.4018, bars: `1397,1411,1438,1448,g 1430,1438,1534,1585,g 1431,1450,1462,1466,r 1431,1460,1496,1496,r 1431,1433,1446,1466,g
1414,1425,1446,1463,r 1371,1415,1447,1448,g 1349,1375,1399,1400,g 1357,1372,1404,1418,g 1357,1362,1377,1388,r
1349,1357,1363,1413,k 1339,1357,1387,1389,g 1298,1298,1342,1343,g 1222,1241,1295,1301,g 1147,1223,1242,1243,g
1157,1163,1218,1219,g 1118,1129,1165,1166,g 1076,1102,1107,1117,k 1019,1041,1061,1082,g 956,980,1017,1048,g
979,979,1004,1023,r 971,990,1004,1005,g 949,957,982,1029,g 909,932,951,957,g 891,920,939,957,r
862,870,921,922,g 717,731,858,859,g 694,730,741,764,r 717,731,760,809,g 311,317,633,644,g
331,337,340,392,k 277,282,345,373,g 225,235,290,308,g 142,206,259,286,g 135,136,208,228,g
68,69,150,217,g 68,69,167,181,r 125,126,157,158,g 138,149,259,268,r 164,224,243,264,g
190,191,207,234,r 205,213,223,260,r 190,206,224,243,g 206,206,262,295,r 208,209,307,314,r
279,294,295,313,k 274,288,341,342,r 286,306,323,325,g 223,257,307,313,g 204,213,259,268,g
152,166,202,211,g 142,196,202,225,k 125,149,180,181,g 77,103,161,167,g 72,102,110,133,r
102,118,307,315,r 427,428,523,581,r 404,406,458,565,r 520,536,598,644,r 408,435,486,522,r
408,433,454,459,g 291,318,345,395,r 362,365,521,622,r 496,497,523,570,r 461,502,521,570,g
470,471,497,581,r 386,409,424,469,r 391,423,487,522,r 466,467,527,528,r 496,502,551,594,r
515,563,566,578,k 531,532,551,592,r 500,545,563,581,r 518,520,580,581,g 520,563,566,578,k
525,532,633,708,r 560,606,633,640,r 543,567,621,640,g 536,562,580,640,r 505,505,569,581,g
496,497,539,551,r 484,515,551,560,g 496,502,521,536,r 470,471,521,560,g 357,358,475,477,g
340,341,366,425,r 357,365,389,425,g 365,366,394,443,r` },
    { y: 680, k: 1 / 3, bars: `408,425,470,475,g 397,398,442,475,r 375,404,428,443,g 353,368,412,413,r 333,377,412,413,r
381,409,420,455,g 349,392,395,410,k 303,341,379,380,g 303,335,363,380,r 312,356,370,371,g
318,325,412,413,r 353,377,422,434,g 334,377,427,428,r 363,385,388,410,k 367,382,454,470,r
408,431,462,470,r 445,446,505,546,r 493,509,516,548,k 492,529,547,553,r 450,503,528,546,g
507,523,569,602,g 439,451,470,512,r 424,425,531,545,r 450,503,544,546,g 439,446,505,506,g
366,382,442,449,g 246,257,343,359,g 255,257,327,329,r 282,320,342,350,r 335,341,358,402,g
340,341,370,412,r 376,377,432,449,r 399,427,431,454,k 387,409,416,449,r 397,409,455,470,r
465,503,517,518,g 444,503,517,533,g 447,526,529,529,k 360,452,526,527,g 418,446,452,486,k
430,439,565,566,r 360,452,901,918,r 780,797,883,885,g 760,772,790,822,g 729,767,773,822,k
712,713,763,785,r 709,710,763,776,g 675,710,734,738,r 710,713,748,776,r 691,692,748,770,g
633,635,680,717,g 607,608,637,651,r 549,572,628,665,g 566,572,610,639,r 565,566,601,629,g
513,530,565,569,g 492,530,544,548,g 503,525,529,536,k 480,488,526,528,g 471,482,496,512,r
424,425,496,497,g 303,305,422,428,g 235,236,301,318,g 247,248,259,303,r 237,258,262,285,k
207,228,259,297,g 204,230,274,275,r 262,272,321,343,r 292,305,343,387,r 292,293,337,359,r
250,257,317,323,g 255,262,349,359,r 355,356,380,413,r 246,278,385,386,g 262,263,337,344,r
303,314,349,380,r 318,347,364,387,r 297,320,328,402,k 255,314,337,338,g 276,293,343,387,g
285,328,331,342,k 314,325,349,359,r 355,361,412,465,r 387,420,489,497,r 402,446,454,486,k
391,456,459,459,k 408,446,475,491,r 450,473,497,507,r 438,473,512,533,g 418,425,496,497,g
408,418,449,455,g 354,356,406,429,g 340,377,385,386,k 376,382,412,423,r 366,382,442,443,r
387,418,448,449,r 424,425,505,518,r 480,514,527,533,g 483,518,522,522,k 480,515,544,545,r
523,542,565,575,r 528,562,573,575,g 543,569,572,587,k 549,562,589,630,r 570,572,628,651,g
549,566,573,589,k 561,563,601,630,r 549,551,607,645,g 507,551,569,587,r 549,551,574,602,r
543,551,569,590,r 418,461,569,570,g 387,461,485,486,r 471,488,548,554,r 540,541,544,588,k
522,542,589,611,r 604,605,664,717,r 624,671,685,686,g 657,673,677,714,k 624,656,695,717,g
633,647,664,680,r 655,671,748,756,r 717,745,763,770,g 670,683,733,756,g 676,677,712,770,r
624,641,685,714,g 639,641,685,687,r 633,635,679,696,g 603,641,673,714,r 641,647,680,717,g
640,647,679,686,r 606,608,652,665,g 561,604,610,611,k 582,599,628,639,r 607,608,649,717,r
597,626,664,665,r 507,530,664,680,g 480,530,544,554,g 493,508,515,553,k 486,488,512,547,r
492,494,553,566,r 507,509,544,567,r 540,542,586,612,r 540,544,566,608,g 472,482,544,546,g
423,452,485,490,g 360,397,433,449,g 336,370,374,405,k 292,293,370,413,g 228,236,287,318,g
208,209,238,329,g 198,209,229,251,r 213,215,265,266,g 198,209,229,267,r 151,164,211,217,g
141,164,187,188,r 120,143,182,191,g 114,122,139,234,g` },
    { y: 120, k: 0.4592, bars: `1211,1243,1316,1317,g 1242,1243,1281,1310,r 1257,1263,1279,1301,g 1223,1232,1263,1298,g 1206,1227,1233,1249,k
1203,1205,1208,1244,k 1135,1137,1224,1225,g 1108,1121,1153,1154,g 1116,1148,1209,1221,r 1162,1163,1209,1213,g
1150,1171,1209,1234,r 1189,1209,1213,1228,k 1059,1071,1144,1180,g 1008,1010,1073,1083,g 997,1030,1037,1057,r
1029,1030,1056,1098,r 1003,1005,1037,1062,g 987,995,1004,1027,r 982,1005,1016,1032,g 967,995,1000,1017,k
891,893,985,997,g 784,812,897,898,g 822,823,858,914,r 799,816,869,882,g 758,760,818,819,g
750,755,760,804,k 699,716,760,772,g 689,711,714,762,k 592,609,686,696,g 587,599,609,655,g
564,623,625,625,k 541,552,645,646,g 499,531,587,635,r 586,587,649,696,r 469,486,649,650,g
454,456,492,532,g 425,455,461,472,r 343,405,462,471,g 373,375,397,472,g 389,411,477,535,g
419,434,493,510,r 167,202,462,463,g 121,136,218,249,g 102,104,121,220,g 175,176,320,349,r
217,257,279,300,g 264,271,274,318,k 240,248,294,299,g 181,218,247,306,g 187,210,213,243,k
159,182,218,234,g 181,211,227,244,r 182,197,233,280,g 185,202,299,330,r` },
];

const sma50 = `55,1236 117,1238 166,1244 202,1238 235,1226 255,1215 280,1198 318,1148 358,1090 398,1040 443,986 465,955 492,921
519,900 539,882 563,865 590,847 604,845 635,831 653,826 675,825 697,830 742,841 767,845 812,846 852,851 885,860 910,856 932,857
968,849 1012,839 1048,832 1070,832 1088,835 1124,843 1164,849 1195,853 1218,855 1258,849 1294,842 1320,838 1370,838 1392,836
1405,838 1449,836 1469,829 1496,823 1527,818 1585,817 1621,822 1666,833 1724,852 1777,867 1808,871 1866,876 1893,876 1916,872
1960,858 2000,840 2023,831 2080,795 2135,749 2173,707 2206,672 2227,643 2265,598 2303,545 2361,464 2401,422`;
const ema200 = `55,1224 99,1228 148,1228 206,1222 255,1211 287,1201 318,1184 327,1176 371,1149 438,1118 483,1094 541,1077 586,1067
648,1052 697,1042 746,1030 758,1027 838,1003 879,994 932,985 972,975 1012,966 1070,958 1137,957 1204,950 1249,939 1289,930
1325,924 1361,918 1400,913 1451,909 1469,904 1509,901 1590,899 1630,896 1692,896 1719,897 1800,897 1849,894 1889,893 1942,884
2005,871 2041,862 2080,851 2114,837 2135,831 2189,806 2244,776 2303,738 2341,712 2401,670`;

function drawPrice() {
    const svg = document.getElementById('price');
    el(svg, 'ellipse', { cx: 2366, cy: 228, rx: 97, ry: 86, fill: '#f9f9f9', stroke: '#e01414', 'stroke-width': 2 });

    let i = 0;
    for (const block of blocks) {
        for (const bar of block.bars.split(/\s+/)) {
            const parts = bar.split(',');
            const [high, top, bottom, low] = parts.slice(0, 4).map(v => Math.round(block.y + block.k * v));
            const x = barX(i++);
            line(svg, x, high, x, low, '#000');
            if (parts[4] === 'k') {
                el(svg, 'rect', { x: x - 3, y: top, width: 6, height: Math.max(1, bottom - top), fill: '#000' });
            } else {
                el(svg, 'rect', { x: x - 2, y: top, width: 4, height: Math.max(2, bottom - top), fill: parts[4] === 'g' ? GREEN : RED, stroke: '#000', 'stroke-width': 2 });
            }
        }
    }

    const dashed = { fill: 'none', 'stroke-width': 2, 'stroke-dasharray': '7 7' };
    el(svg, 'polyline', { points: sma50, stroke: '#2446d8', ...dashed });
    el(svg, 'polyline', { points: ema200, stroke: '#ee3838', ...dashed });

    // trend lines
    line(svg, 336, 709, 2135, 801, '#000');
    line(svg, 241, 819, 541, 819, '#000');
    line(svg, 147, 987, 2135, 987, '#000');
    line(svg, 2291, 281, 2455, 281, '#000');
    line(svg, 55, 1324, 647, 1338, '#000');

    line(svg, 1727, 180, 1727, 777, '#0a7d14');
    el(svg, 'path', { d: 'M1727 171l8 13h-16z', fill: '#0a7d14' });
    label(svg, 0, 0, '40%', { transform: 'translate(1720 229) rotate(-90)', fill: '#0a7d14', 'font-weight': 700 });

    // crosshair
    line(svg, 55, 381, 2477, 381, '#f99');
    line(svg, 647, 143, 647, 1338, '#f99');

    label(svg, 60, 1335, 'ProRealTime.com - Fin de Día');
    el(svg, 'use', { href: '#i-info', x: 2390, y: 1312, width: 20, height: 21 });
    el(svg, 'path', { d: 'M560 1314h19v17h-19z', fill: '#e9f1f7', stroke: '#7fa9c8' });
    el(svg, 'path', { d: 'M560 1313h19v7h-19z', fill: '#1f86bd' });
    el(svg, 'path', { d: 'M563 1322h5v5h-5z', fill: '#e2483f' });
    el(svg, 'path', { d: 'M562 1333h6m2-2h6m0-4v8m4-14v14', stroke: '#d3b21c', 'stroke-width': 4 });

    // price axis
    line(svg, 2477, 113, 2477, 1338, AXIS);
    const ticks = [['5,6', 140], ['5,4', 205], ['5,2', 274], ['5', 345], ['4,8', 419], ['4,6', 496], ['4,4', 576], ['4,2', 661],
        ['4', 749], ['3,8', 841], ['3,6', 937], ['3,4', 1040], ['3,2', 1150], ['3', 1266]];
    for (const [text, y] of ticks) {
        line(svg, 2477, y, 2483, y, AXIS);
        label(svg, 2489, y + 7, text, { 'font-weight': text.length === 1 ? 700 : 400 });
    }
    line(svg, 2477, 257, 2484, 257, '#000');
    el(svg, 'rect', { x: 2485, y: 245, width: 44, height: 24, fill: 'url(#gold)', stroke: AXIS, 'stroke-width': 2 });
    label(svg, 2489, 264, '5,25');
    line(svg, 2477, 381, 2484, 381, '#000');
    el(svg, 'rect', { x: 2485, y: 369, width: 54, height: 24, fill: '#ffff1e', stroke: AXIS, 'stroke-width': 2 });
    label(svg, 2489, 388, '4,905');
    line(svg, 55, 1337, 2556, 1337, AXIS);
}

function drawRsi() {
    const svg = document.getElementById('rsi');
    const points = `395,1351 405,1353 413,1352 421,1355 430,1353 445,1352 453,1350 461,1352 476,1348 484,1350 500,1367
507,1364 514,1367 530,1360 539,1359 546,1364 557,1364 578,1360 593,1364 624,1364 632,1362 640,1364 648,1367 657,1367 664,1362
672,1363 680,1359 704,1360 719,1353 735,1353 742,1355 750,1353 795,1353 806,1352 820,1352 828,1355 836,1353 843,1357
852,1355 860,1359 868,1360 890,1366 898,1362 906,1362 913,1359 923,1362 945,1355 953,1350 960,1353 977,1355 992,1359 1015,1360
1023,1364 1040,1366 1046,1361 1055,1359 1063,1366 1071,1381 1079,1373 1087,1371 1094,1371 1102,1369 1109,1366 1126,1367
1134,1364 1141,1361 1157,1360 1164,1360 1172,1357 1188,1357 1204,1353 1211,1355 1219,1352 1227,1348 1235,1346 1242,1348
1258,1348 1267,1350 1274,1353 1297,1352 1305,1357 1312,1357 1321,1353 1328,1357 1336,1357 1344,1359 1352,1355 1368,1355
1384,1360 1391,1362 1399,1366 1407,1362 1415,1364 1423,1364 1430,1366 1438,1364 1446,1360 1453,1360 1461,1357 1477,1360
1493,1362 1500,1366 1509,1367 1517,1366 1524,1368 1540,1371 1547,1369 1555,1371 1571,1367 1578,1371 1587,1364 1595,1366
1611,1366 1618,1355 1626,1358 1634,1362 1641,1362 1657,1371 1673,1371 1680,1369 1688,1369 1696,1376 1704,1376 1711,1366
1720,1367 1728,1362 1736,1364 1743,1360 1751,1364 1759,1362 1767,1364 1774,1359 1782,1359 1806,1362 1814,1353 1838,1353
1844,1357 1852,1356 1861,1359 1869,1357 1876,1353 1890,1350 1900,1350 1907,1346 1948,1346 1955,1345 1965,1346 1985,1345
2000,1346 2020,1346 2032,1343 2041,1343 2048,1350 2056,1349 2063,1352 2072,1352 2080,1348 2087,1346 2103,1350 2112,1348
2136,1348 2143,1345 2155,1346 2190,1345 2205,1343 2213,1343 2220,1345 2235,1345 2244,1350 2252,1346 2290,1346 2297,1352
2305,1346 2322,1346 2330,1353 2360,1352 2373,1350 2387,1352 2393,1352 2401,1355`;
    el(svg, 'polyline', { points, fill: 'none', stroke: '#000', 'stroke-width': 2 });
    line(svg, 2213, 1343, 2430, 1346, '#ee0a0a', 4);
    line(svg, 647, 1338, 647, 1383, '#f99');
    line(svg, 2477, 1338, 2477, 1383, AXIS);
    line(svg, 2477, 1355, 2484, 1355, '#000');
    el(svg, 'rect', { x: 2485, y: 1343, width: 65, height: 25, fill: '#f1f4fb', stroke: AXIS, 'stroke-width': 2 });
    label(svg, 2489, 1363, '56,194');
    line(svg, 55, 1338, 2556, 1338, AXIS);
    line(svg, 55, 1382, 2556, 1382, AXIS);
}

// bar heights, negative for a falling day
const volumes = [4, -13, -4, -4, 2, -2, 4, 0, 2, -2, 4, 0, 2, 6, 4, 2, 2, 4, 4, 7, -4, 2, 4, 4, -2, 4, 11, -7, 2, 44,
    -14, 6, 16, 13, 16, 13, -9, 7, -6, 9, 2, -4, 6, -9, -6, 4, -4, 2, 9, 2, 7, -7, 6, 13, -7, -13, -25, 16, -11, 18,
    16, 16, -44, -18, 21, 25, 14, -9, -7, -9, -7, 9, -11, 6, -9, -21, 13, 13, -14, 16, -6, 6, -9, 7, 13, -11, 14, -4, 2, -2,
    4, -4, 14, -2, 6, 7, -2, 6, -9, 4, -6, 4, -4, -2, -4, -2, -2, 4, 0, 4, -7, 2, 6, 7, 11, -4, -4, 2, 0, -4,
    4, 6, -2, -4, 4, -4, 4, 4, -4, -55, 18, 9, 11, 7, 7, -6, -14, 7, 7, 2, 9, -4, 2, 2, 2, 2, 2, -2, 4, 6,
    7, -4, 2, 4, -7, -2, -2, 2, 2, -2, -2, 2, 0, -2, 0, 4, 0, 2, -2, 0, -6, -7, 4, -2, -2, -4, 2, 2, 0, 2,
    -2, -4, -6, -2, -2, -4, 0, -2, -2, 0, 2, -4, 2, 0, -2, 7, -4, -2, 2, 9, -9, -4, 4, -4, -9, -2, 4, 6, 0, -4,
    -4, 4, -7, 4, -4, 2, -2, 2, -2, 2, 6, -2, -4, -4, 7, 4, 2, 2, -2, 2, -2, 2, 4, 2, 7, 6, 7, 6, 6, -4,
    0, -4, 2, 0, 6, 6, 11, -4, 2, 4, 4, 4, 16, 6, -6, 4, -6, 4, 14, 6, -4, -6, 4, 4, -6, 7, 7, 11, -7, 4,
    6, 2, 4, 7, 18, 4, -6, 6, -9, -7, 11, 11, -4, 9, 9, -7, -9, 32, 13, 7, -9, 7, -4, 4, 4, 2, 4, -6, 4, -13];

function drawVolume() {
    const svg = document.getElementById('volume');
    line(svg, 609, 1383, 609, 1440, '#f99');
    volumes.forEach((v, i) => {
        const h = Math.abs(v);
        if (h) el(svg, 'rect', { x: barX(i) - 2, y: 1440 - h, width: 5, height: h, fill: v > 0 ? GREEN : RED });
    });
    line(svg, 55, 1383, 2556, 1383, AXIS);
    line(svg, 55, 1440, 2477, 1440, AXIS, 1);
    line(svg, 2477, 1383, 2477, 1440, AXIS);

    const months = [['feb', 147], ['mar', 304], ['abr', 470], ['', 625], ['jun', 789], ['jul', 954], ['ago', 1134], ['sept', 1298],
        ['oct', 1471], ['nov', 1650], ['dic', 1806], ['2026', 1972], ['feb', 2135], ['mar', 2291], ['', 2462]];
    for (const [text, x] of months) {
        line(svg, x, 1440, x, 1445, AXIS);
        label(svg, x, 1464, text, { 'text-anchor': 'middle', 'font-weight': text === '2026' ? 700 : 400 });
    }
    line(svg, 647, 1440, 647, 1446, '#000');
    el(svg, 'rect', { x: 578, y: 1447, width: 141, height: 22, fill: '#ffff1e', stroke: AXIS, 'stroke-width': 2 });
    label(svg, 648, 1465, 'mié 7 may 2025', { 'text-anchor': 'middle' });

    line(svg, 2477, 1391, 2483, 1391, AXIS);
    label(svg, 2489, 1400, '5.000k');
    line(svg, 2477, 1427, 2484, 1427, RED);
    el(svg, 'rect', { x: 2485, y: 1414, width: 70, height: 25, fill: '#f1f4fb', stroke: AXIS, 'stroke-width': 2 });
    label(svg, 2489, 1434, '1.398k', { fill: '#d95a5e', 'font-weight': 700 });
}

drawPrice();
drawRsi();
drawVolume();
```
